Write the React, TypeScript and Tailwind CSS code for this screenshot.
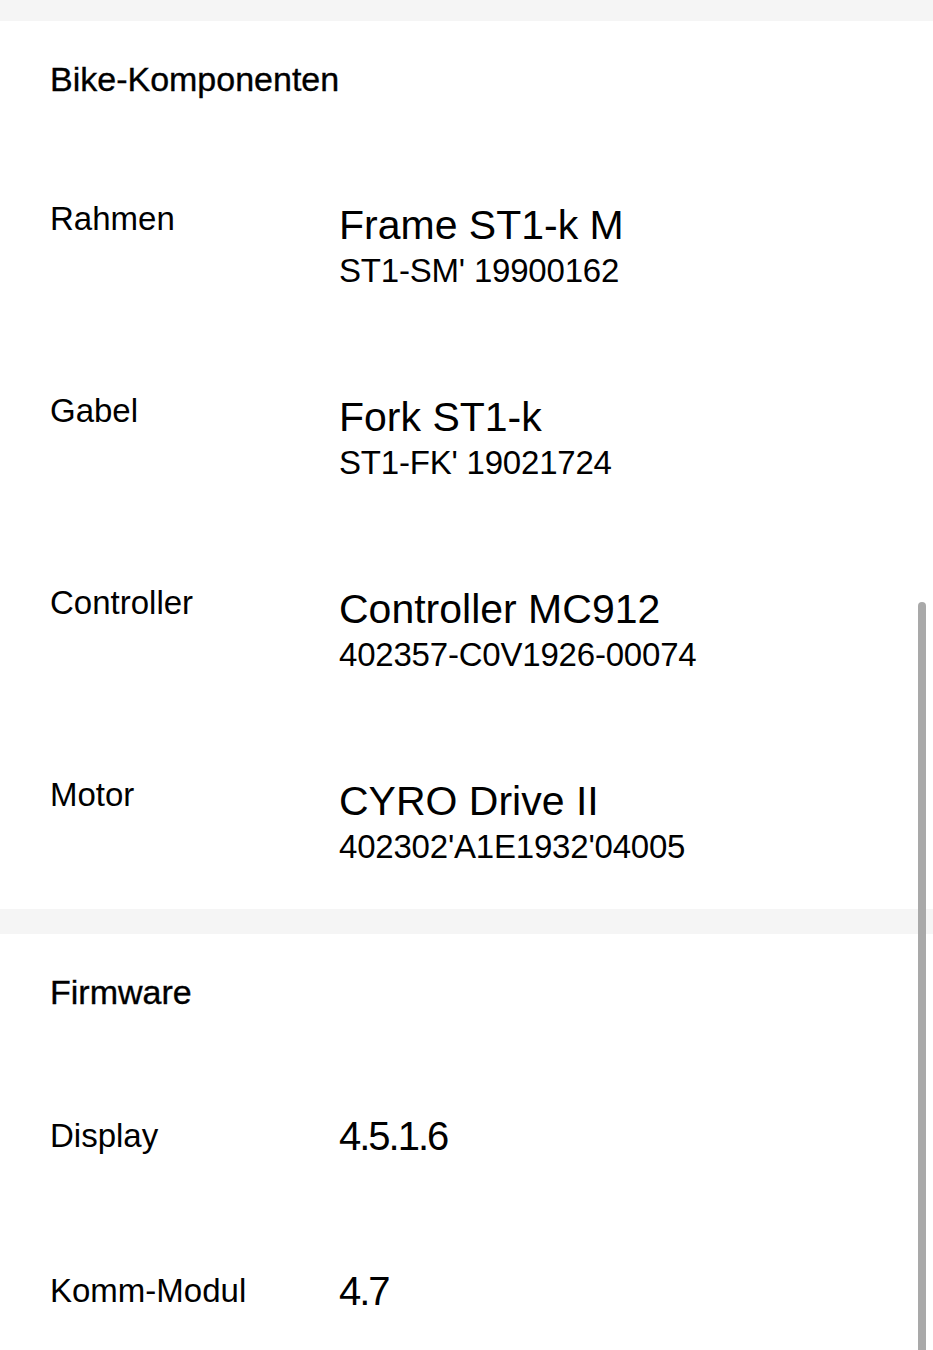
import React from "react";

type Part = { label: string; name: string; serial: string };

const parts: Part[] = [
  { label: "Rahmen", name: "Frame ST1-k M", serial: "ST1-SM' 19900162" },
  { label: "Gabel", name: "Fork ST1-k", serial: "ST1-FK' 19021724" },
  { label: "Controller", name: "Controller MC912", serial: "402357-C0V1926-00074" },
  { label: "Motor", name: "CYRO Drive II", serial: "402302'A1E1932'04005" },
];

const firmware = [
  { label: "Display", version: "4.5.1.6" },
  { label: "Komm-Modul", version: "4.7" },
];

function SectionTitle({ children }: { children: React.ReactNode }) {
  return (
    <h2 className="text-[34px] leading-[40px] font-medium text-black [-webkit-text-stroke:0.35px_#000]">
      {children}
    </h2>
  );
}

export default function App() {
  return (
    <div
      className="relative h-[1350px] w-full overflow-hidden bg-white text-black"
      style={{ fontFamily: '"Liberation Sans", Arial, sans-serif' }}
    >
      {/* top spacer band */}
      <div className="h-[21px] bg-[#f5f5f5]" />

      {/* Bike components */}
      <section className="px-[50px] pt-[38px] pb-[40px]">
        <SectionTitle>Bike-Komponenten</SectionTitle>
        <div className="mt-[100px] flex flex-col gap-[98px]">
          {parts.map((p) => (
            <div key={p.label} className="flex items-start">
              <div className="w-[289px] shrink-0 text-[33px] leading-[40px]">{p.label}</div>
              <div className="mt-[2px] flex flex-col">
                <div className="text-[41px] leading-[48px]">{p.name}</div>
                <div className="text-[33px] leading-[44px] tracking-[-0.2px]">{p.serial}</div>
              </div>
            </div>
          ))}
        </div>
      </section>

      <div className="h-[25px] bg-[#f5f5f5]" />

      {/* Firmware */}
      <section className="px-[50px] pt-[38px]">
        <SectionTitle>Firmware</SectionTitle>
        <div className="mt-[100px] flex flex-col gap-[107px]">
          {firmware.map((f) => (
            <div key={f.label} className="flex h-[48px] items-center">
              <div className="w-[289px] shrink-0 text-[33px] leading-[40px]">{f.label}</div>
              <div className="text-[40px] leading-[48px] tracking-[-2px]">{f.version}</div>
            </div>
          ))}
        </div>
      </section>

      {/* overlay scrollbar thumb */}
      <div className="absolute right-[7px] top-[602px] bottom-0 w-[8px] rounded-t-full bg-[#a9a9a9]" />
    </div>
  );
}
